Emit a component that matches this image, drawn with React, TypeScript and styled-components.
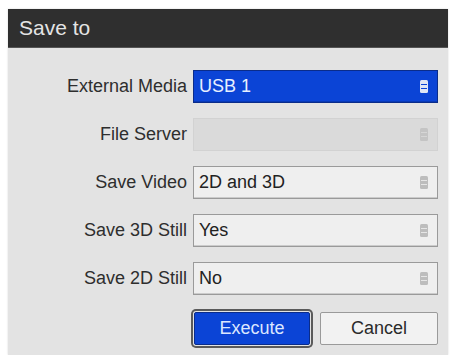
import { Fragment } from 'react';
import styled, { createGlobalStyle } from 'styled-components';

const Global = createGlobalStyle`
  body {
    margin: 0;
    background: #fff;
    font-family: "Liberation Sans", Arial, sans-serif;
  }
`;

const Dialog = styled.div`
  margin: 9px 0 0 8px;
  width: 440px;
  height: 346px;
  background: #e3e3e3;
  display: flex;
  flex-direction: column;
  box-shadow: 0 0 2px rgba(0, 0, 0, 0.15);
`;

const TitleBar = styled.div`
  height: 39px;
  background: #2f2f2f;
  border-bottom: 1px solid #555;
  box-sizing: border-box;
  display: flex;
  align-items: center;
  padding-left: 11px;
  color: #e4e4e4;
  font-size: 21px;
`;

const Form = styled.div`
  display: grid;
  grid-template-columns: 1fr 245px;
  column-gap: 6px;
  row-gap: 15px;
  padding: 22px 10px 0 0;
`;

const Label = styled.div`
  display: flex;
  align-items: center;
  justify-content: flex-end;
  font-size: 18px;
  color: #2e2e2e;
`;

type Variant = 'active' | 'disabled' | 'normal';

const Field = styled.div<{ $variant: Variant }>`
  height: 33px;
  box-sizing: border-box;
  display: flex;
  align-items: center;
  justify-content: space-between;
  padding: 0 9px 0 5px;
  font-size: 18px;
  border: 1px solid
    ${(p) => (p.$variant === 'active' ? '#0a2c8a' : p.$variant === 'disabled' ? '#d2d2d2' : '#9a9a9a')};
  background: ${(p) => (p.$variant === 'active' ? '#0b44d6' : p.$variant === 'disabled' ? '#dadada' : '#efefef')};
  color: ${(p) => (p.$variant === 'active' ? '#e6efff' : '#222')};
  box-shadow: ${(p) => (p.$variant === 'disabled' ? 'none' : 'inset 0 -1px 0 rgba(0,0,0,0.15)')};
`;

const Buttons = styled.div`
  grid-column: 2;
  display: flex;
  justify-content: space-between;
  align-items: center;
  margin-top: 2px;
`;

const Button = styled.button<{ $primary?: boolean }>`
  font-family: inherit;
  font-size: 18px;
  height: 33px;
  border-radius: 2px;
  cursor: pointer;
  ${(p) =>
    p.$primary
      ? `
    width: 116px;
    margin-left: 1px;
    background: #0b44d6;
    color: #dce7ff;
    border: 1px solid #0a2c8a;
    box-shadow: 0 0 0 1px #e3e3e3, 0 0 0 3px #5a5a5a;
  `
      : `
    width: 118px;
    background: #f2f2f2;
    color: #2a2a2a;
    border: 1px solid #9a9a9a;
  `}
`;

const ListIcon = ({ color, line }: { color: string; line: string }) => (
  <svg width="8" height="13" viewBox="0 0 8 13">
    <rect x="0" y="0" width="8" height="13" rx="1.5" fill={color} />
    <rect x="1" y="4" width="6" height="1" fill={line} />
    <rect x="1" y="8" width="6" height="1" fill={line} />
  </svg>
);

const iconColors: Record<Variant, [string, string]> = {
  active: ['#dfe6f5', '#0b44d6'],
  disabled: ['#c4c4c4', '#d6d6d6'],
  normal: ['#bdbdbd', '#e6e6e6'],
};

const rows: { label: string; value: string; variant: Variant }[] = [
  { label: 'External Media', value: 'USB 1', variant: 'active' },
  { label: 'File Server', value: '', variant: 'disabled' },
  { label: 'Save Video', value: '2D and 3D', variant: 'normal' },
  { label: 'Save 3D Still', value: 'Yes', variant: 'normal' },
  { label: 'Save 2D Still', value: 'No', variant: 'normal' },
];

const App = () => {
  return (
    <>
      <Global />
      <Dialog>
        <TitleBar>Save to</TitleBar>
        <Form>
          {rows.map((r) => (
            <Fragment key={r.label}>
              <Label>{r.label}</Label>
              <Field $variant={r.variant}>
                <span>{r.value}</span>
                <ListIcon color={iconColors[r.variant][0]} line={iconColors[r.variant][1]} />
              </Field>
            </Fragment>
          ))}
          <Buttons>
            <Button $primary>Execute</Button>
            <Button>Cancel</Button>
          </Buttons>
        </Form>
      </Dialog>
    </>
  );
};

export default App;
